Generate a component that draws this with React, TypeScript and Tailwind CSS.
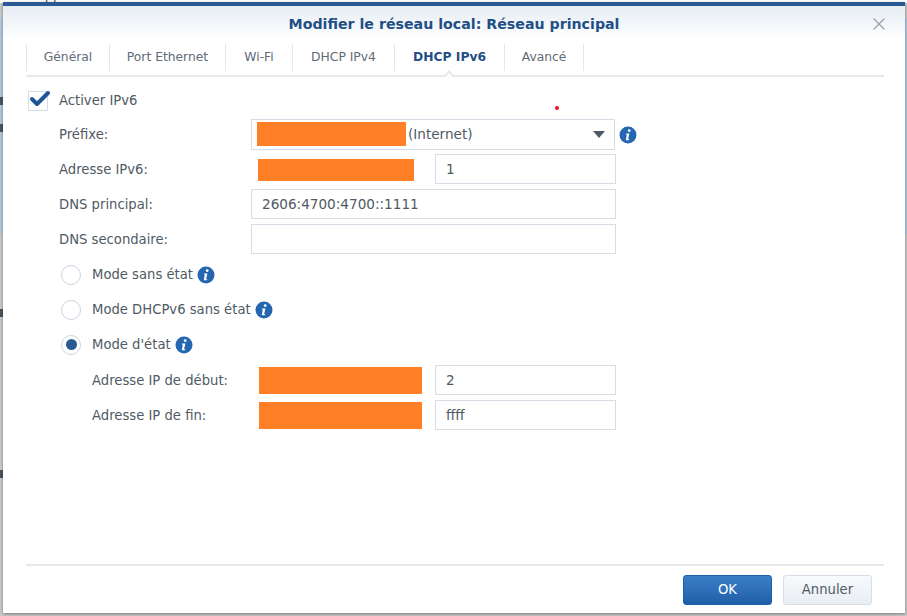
import { Check, X } from "lucide-react";

const font = "font-['DejaVu_Sans',Verdana,sans-serif]";
const tabs = [
  { label: "Général", w: "w-[83px]" },
  { label: "Port Ethernet", w: "w-[116px]" },
  { label: "Wi-Fi", w: "w-[67px]" },
  { label: "DHCP IPv4", w: "w-[102px]" },
  { label: "DHCP IPv6", w: "w-[110px]", active: true },
  { label: "Avancé", w: "w-[79px]" },
];

// Bits of the page behind the dialog that poke out on its left edge.
const behindMarks = ["top-[97px]", "top-[124px]", "top-[309px]", "top-[470px]"];

const fieldBorder = "border border-[#d5dde6] bg-white";

function InfoIcon() {
  return (
    <svg width="18" height="18" viewBox="0 0 18 18" className="shrink-0">
      <circle cx="9" cy="9" r="8.5" fill="#2566b0" />
      <circle cx="10.2" cy="4.6" r="1.4" fill="#fff" />
      <path d="M7 7.6h3.4l-1.3 5.6h1.2l-.3 1H6.8l1-5.6H6.8z" fill="#fff" />
    </svg>
  );
}

function Radio({ checked = false }: { checked?: boolean }) {
  return (
    <span className="flex h-5 w-5 shrink-0 items-center justify-center rounded-full border border-[#c9d3de] bg-white">
      {checked ? <span className="h-[11px] w-[11px] rounded-full bg-[#2a5a94]" /> : null}
    </span>
  );
}

function Input({ value = "", className = "" }: { value?: string; className?: string }) {
  return (
    <div className={`mb-[1px] flex h-[30px] items-center px-[10px] pt-[1px] text-[13.6px] ${fieldBorder} ${className}`}>{value}</div>
  );
}

function Row({ label, children }: { label: string; children: React.ReactNode }) {
  return (
    <div className="flex h-[35px] items-center pl-[56px]">
      <span className="mt-[1px] w-[192px] shrink-0">{label}</span>
      {children}
    </div>
  );
}

function RadioRow({ label, checked }: { label: string; checked?: boolean }) {
  return (
    <div className="flex h-[35px] items-center pl-[58px]">
      <Radio checked={checked} />
      <span className="ml-[11px] mt-[1px]">{label}</span>
      <span className="ml-[4px]">
        <InfoIcon />
      </span>
    </div>
  );
}

function SubRow({ label, value }: { label: string; value: string }) {
  return (
    <div className="flex h-[35px] items-center pl-[89px]">
      <span className="w-[167px] shrink-0">{label}</span>
      <div className="h-[27px] w-[163px] shrink-0 bg-[#ff7f27]" />
      <Input value={value} className="ml-[13px] w-[181px]" />
    </div>
  );
}

export default function App() {
  return (
    <div className={`relative h-[616px] w-[907px] overflow-hidden bg-[#c9c9c9] text-[13.2px] text-[#505a64] ${font}`}>
      {/* page behind the dialog: only slivers of it show */}
      <div className="absolute left-0 top-[-11px] flex h-[14px] w-full items-center bg-white pl-[28px] text-[#505a64]">
        <span>Supprimer</span>
        <span className="ml-[54px] font-bold">Suites VLAN</span>
        <span className="ml-[33px]">Paramètres avancés</span>
      </div>
      <div className="absolute left-0 top-[18px] h-[216px] w-[3px] bg-[#b3c8dc]" />
      <div className="absolute right-0 top-[18px] h-[216px] w-[2px] bg-[#b3c8dc]" />
      {behindMarks.map((top) => (
        <div key={top} className={`absolute left-0 h-[8px] w-[3px] bg-[#4a5560] ${top}`} />
      ))}

      <div className="absolute left-[3px] top-[2px] flex h-[611px] w-[902px] flex-col border-t-[4px] border-[#2a5a94] bg-white shadow-[0_1px_3px_rgba(0,0,0,0.4)]">
        <div className="relative flex h-[34px] shrink-0 items-center justify-center bg-gradient-to-b from-[#e6edf4] to-white pt-[4px] text-[14.2px] font-bold text-[#1f4f86]">
          Modifier le réseau local: Réseau principal
          <X className="absolute right-[16px] top-[8px] h-[20px] w-[20px] text-[#9aa0a6]" strokeWidth={1.5} />
        </div>

        <div className="relative ml-[23px] mr-[21px] mt-[4px] flex h-[33px] shrink-0 items-start border-b-2 border-[#e6e9ec] pb-[6px]">
          <div className="flex h-[27px] border-l border-[#e3e8ee] text-[12.3px]">
            {tabs.map((t) => (
              <div
                key={t.label}
                className={`flex items-center justify-center border-r border-[#e3e8ee] ${t.w} ${t.active ? "font-bold text-[#1f4f86]" : "text-[#5f6b76]"}`}
              >
                {t.label}
              </div>
            ))}
          </div>
          {/* notch under the active tab */}
          <span className="absolute bottom-[-5px] left-[419px] h-[8px] w-[8px] rotate-45 border-l-2 border-t-2 border-[#e6e9ec] bg-white" />
        </div>

        <div className="flex h-[487px] flex-col">
          <div className="flex h-[34px] shrink-0 items-center pl-[25px] pt-[13px]">
            <span className="flex h-[20px] w-[20px] items-center justify-center border border-[#d5dde6]">
              <Check className="ml-[3px] mt-[-3px] h-[24px] w-[24px] shrink-0 text-[#1f5596]" strokeWidth={4} />
            </span>
            <span className="ml-[11px]">Activer IPv6</span>
          </div>
          <div className="relative mt-[6px] flex flex-col">
            <Row label="Préfixe:">
              <div className={`mb-[1px] flex h-[31px] w-[364px] items-center pl-[5px] text-[13.6px] ${fieldBorder}`}>
                <div className="h-[24px] w-[149px] bg-[#ff7f27]" />
                <span className="ml-[2px]">(Internet)</span>
                <span className="ml-auto mr-[9px] h-0 w-0 border-x-[6px] border-t-[7px] border-x-transparent border-t-[#505a64]" />
              </div>
              <span className="ml-[4px]">
                <InfoIcon />
              </span>
              <span className="absolute left-[552px] top-[-11px] h-[4px] w-[4px] rounded-full bg-[#e81123]" />
            </Row>
            <Row label="Adresse IPv6:">
              <div className="ml-[7px] h-[22px] w-[156px] shrink-0 bg-[#ff7f27]" />
              <Input value="1" className="ml-[21px] w-[181px]" />
            </Row>
            <Row label="DNS principal:">
              <Input value="2606:4700:4700::1111" className="w-[365px]" />
            </Row>
            <Row label="DNS secondaire:">
              <Input className="w-[365px]" />
            </Row>
          </div>
          <RadioRow label="Mode sans état" />
          <RadioRow label="Mode DHCPv6 sans état" />
          <RadioRow label="Mode d'état" checked />
          <div className="mt-[1px]">
            <SubRow label="Adresse IP de début:" value="2" />
            <SubRow label="Adresse IP de fin:" value="ffff" />
          </div>
        </div>

        <div className="ml-[23px] mr-[21px] flex flex-1 items-start justify-end border-t-2 border-[#e6e9ec] pr-[12px] pt-[9px]">
          <button className="h-[30px] w-[89px] rounded-[3px] border border-[#1f5fa8] bg-gradient-to-b from-[#3b7fc9] to-[#1f5fa8] text-white">
            OK
          </button>
          <button className="ml-[11px] h-[30px] w-[89px] rounded-[3px] border border-[#d5dde6] bg-gradient-to-b from-[#f8fafc] to-[#e9eef3] text-[#505a64]">
            Annuler
          </button>
        </div>
      </div>
    </div>
  );
}
